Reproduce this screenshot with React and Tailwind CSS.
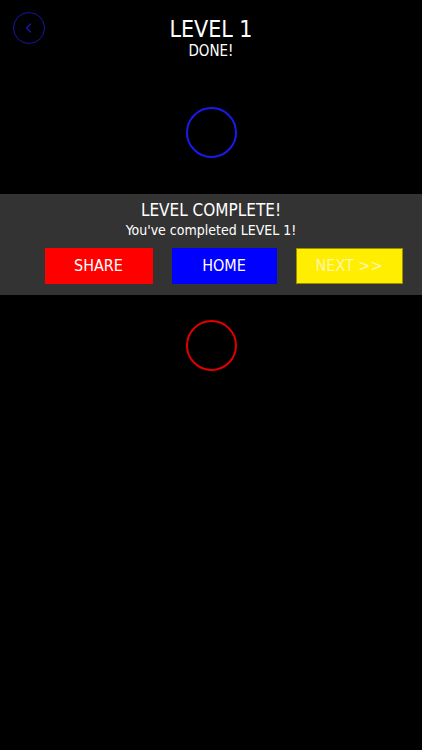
import React from "react";

const font = { fontFamily: '"DejaVu Sans Condensed", "DejaVu Sans", sans-serif', fontStretch: "condensed" };

const Ring = ({ color }) => (
  <div className={`w-[51px] h-[51px] rounded-full border-2 ${color}`} />
);

const App = () => {
  return (
    <div className="w-[422px] h-[750px] bg-black text-white overflow-hidden" style={font}>
      <header className="grid grid-cols-[58px_1fr_58px] items-start pt-[12px]">
        <button className="ml-[13px] w-[32px] h-[32px] rounded-full border-[1.5px] border-[#1616a8] flex items-center justify-center">
          <svg width="12" height="12" viewBox="0 0 12 12" fill="none">
            <path d="M7.5 2 L3.5 6 L7.5 10" stroke="#1616a8" strokeWidth="1.5" strokeLinecap="round" strokeLinejoin="round" />
          </svg>
        </button>
        <div className="flex flex-col items-center pt-[3px]">
          <h1 className="text-[23px] leading-[28px]">LEVEL 1</h1>
          <p className="text-[15px] leading-[18px] mt-[-1px]">DONE!</p>
        </div>
        <div />
      </header>

      <div className="flex justify-center mt-[47px]">
        <Ring color="border-[#1a1aee]" />
      </div>

      <section className="mt-[36px] h-[101px] bg-[#333333] flex flex-col items-center pt-[6px]">
        <h2 className="text-[17px] leading-[20px]">LEVEL COMPLETE!</h2>
        <p className="text-[14px] leading-[18px] mt-[1px]">You've completed LEVEL 1!</p>
        <div className="flex mt-[9px] gap-[19px] pl-[25px]">
          <button className="w-[108px] h-[36px] bg-[#ff0000] text-[16px] text-white">SHARE</button>
          <button className="w-[105px] h-[36px] bg-[#0000ff] text-[16px] text-white">HOME</button>
          <button className="w-[107px] h-[36px] bg-[#ffee00] border border-[#9c9000] text-[16px] text-[#fff7a8]">NEXT &gt;&gt;</button>
        </div>
      </section>

      <div className="flex justify-center mt-[25px]">
        <Ring color="border-[#e00000]" />
      </div>
    </div>
  );
};

export default App;
